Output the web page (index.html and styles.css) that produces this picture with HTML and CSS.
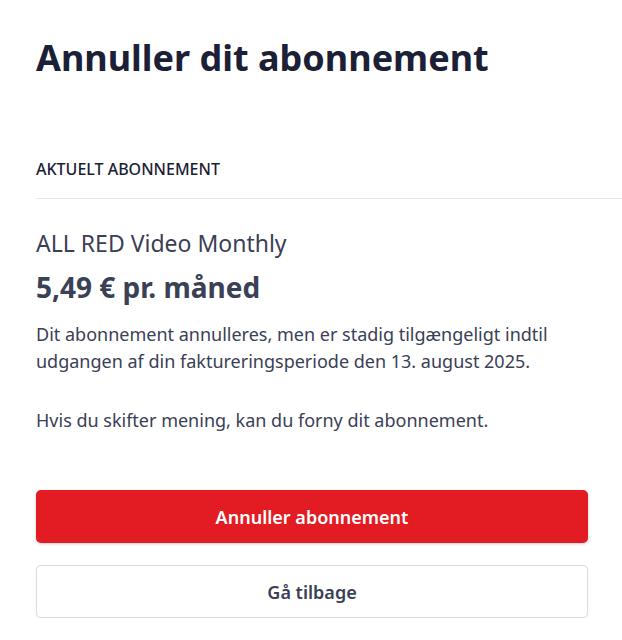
FILE: index.html
```html
<!DOCTYPE html>
<html lang="da">
<head>
    <meta charset="UTF-8">
    <meta name="viewport" content="width=device-width, initial-scale=1.0">
    <title>Annuller dit abonnement</title>
    <link rel="stylesheet" href="styles.css">
</head>
<body>

    <main class="page">
        <h1>Annuller dit abonnement</h1>

        <!-- Current subscription -->
        <section class="current">
            <h2 class="section-label">AKTUELT ABONNEMENT</h2>
            <p class="plan-name">ALL RED Video Monthly</p>
            <p class="plan-price">5,49 € pr. måned</p>
            <p class="info">Dit abonnement annulleres, men er stadig tilgængeligt indtil udgangen af din faktureringsperiode den 13. august 2025.</p>
            <p class="info">Hvis du skifter mening, kan du forny dit abonnement.</p>
        </section>

        <!-- Actions -->
        <div class="actions">
            <button class="btn btn-cancel">Annuller abonnement</button>
            <button class="btn btn-back">Gå tilbage</button>
        </div>
    </main>

</body>
</html>
```

FILE: styles.css
```css
/* Basic Reset */
* {
    margin: 0;
    padding: 0;
    box-sizing: border-box;
}

body {
    font-family: "Noto Sans", "Open Sans", sans-serif;
    background-color: #fff;
    color: #3a4055;
}

.page {
    padding: 30px 34px 0 36px;
}

h1 {
    font-size: 36px;
    font-weight: 700;
    color: #1b2036;
    line-height: 56px;
}

/* Current subscription */
.current {
    margin-top: 73px;
}

.section-label {
    font-size: 16px;
    font-weight: 500;
    color: #1b2036;
    line-height: 20px;
    padding-bottom: 19px;
    border-bottom: 1px solid #e4e7ec;
    margin-right: -34px;
}

.plan-name {
    font-size: 23px;
    margin-top: 29px;
    line-height: 30px;
}

.plan-price {
    font-size: 28px;
    font-weight: 700;
    margin-top: 12px;
    line-height: 34px;
}

.info {
    font-size: 18px;
    line-height: 27px;
    margin-top: 17px;
}

.info + .info {
    margin-top: 32px;
}

/* Actions */
.actions {
    display: flex;
    flex-direction: column;
    gap: 22px;
    margin-top: 56px;
}

.btn {
    font-family: inherit;
    font-size: 18px;
    font-weight: 600;
    height: 53px;
    border-radius: 5px;
    cursor: pointer;
}

.btn-cancel {
    background-color: #e31b23;
    color: #fff;
    border: none;
    box-shadow: 0 1px 3px rgba(0, 0, 0, 0.2);
}

.btn-back {
    background-color: #fff;
    color: #3a4055;
    border: 1px solid #d9dce2;
    box-shadow: 0 1px 2px rgba(0, 0, 0, 0.08);
}
```
